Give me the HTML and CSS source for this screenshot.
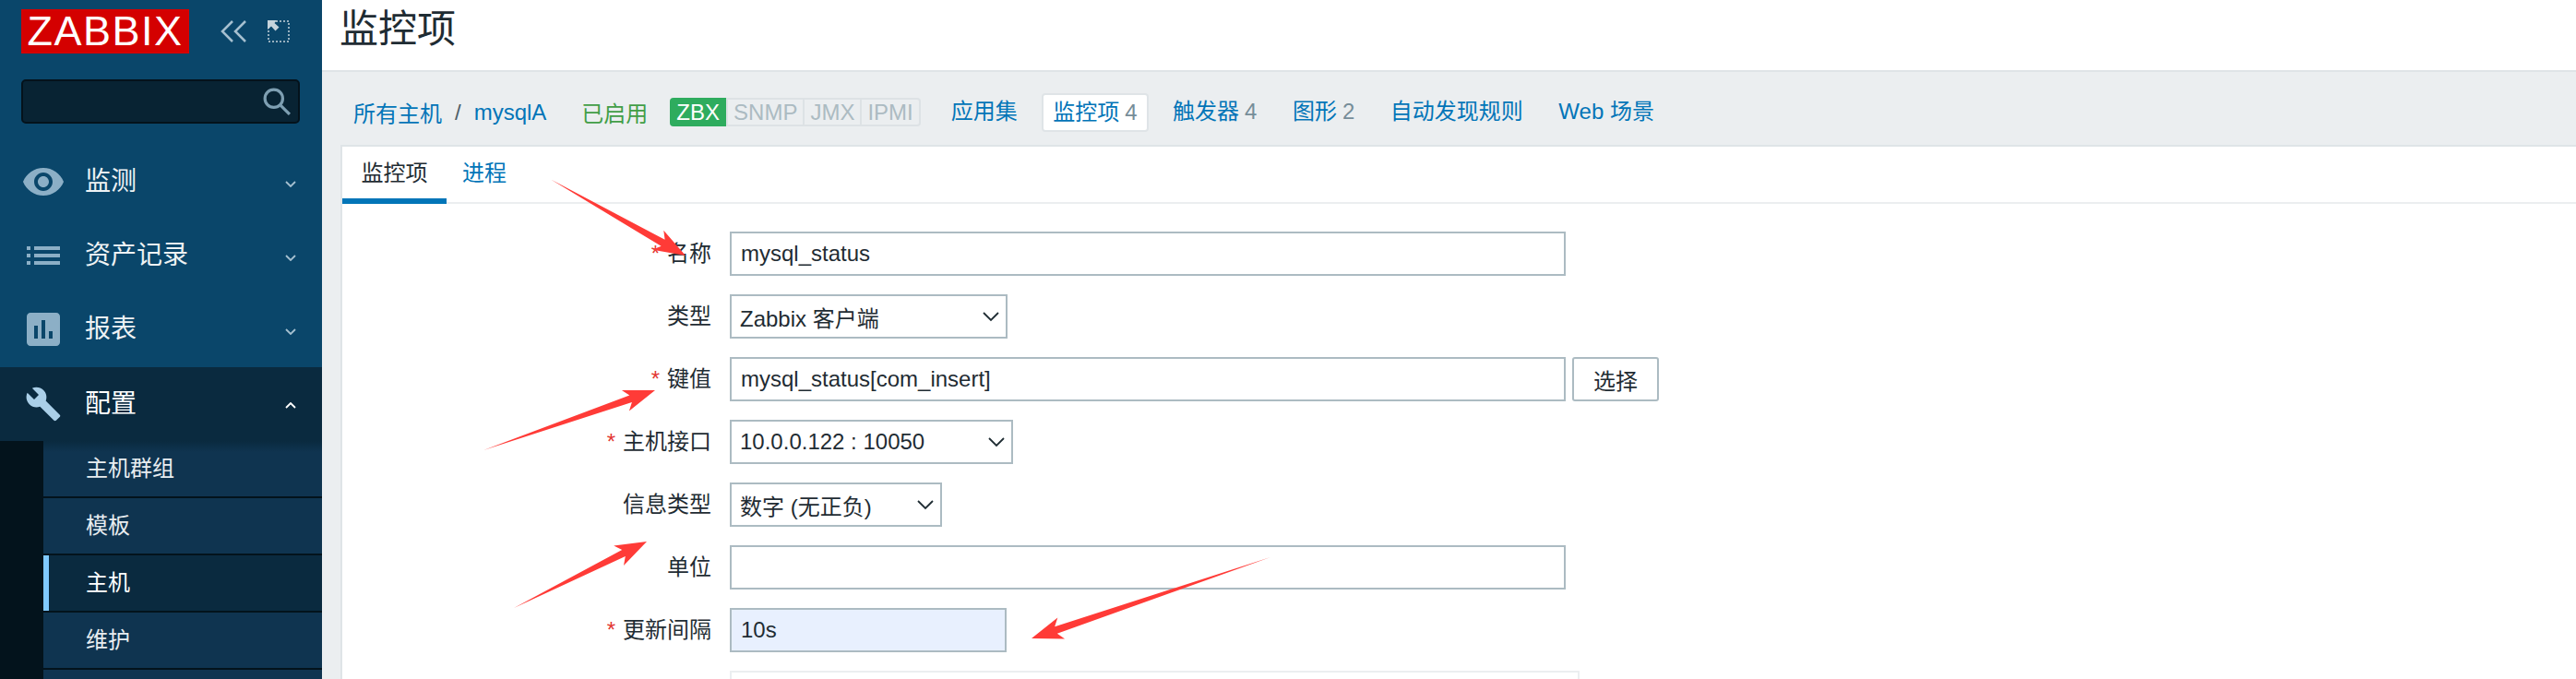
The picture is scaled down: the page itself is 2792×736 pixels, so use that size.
FILE: index.html
```html
<!DOCTYPE html>
<html lang="en">
	<head>
		<meta charset="utf-8">
		<title>监控项</title>
		<link rel="stylesheet" href="styles.css">
	</head>
	<body>
		<aside class="sidebar">
			<div class="brand">
				<div class="logo">ZABBIX</div>
				<svg class="brand-icon collapse" viewBox="0 0 28 24"><path d="M13 1 2 12l11 11M27 1 16 12l11 11"/></svg>
				<svg class="brand-icon expand" viewBox="0 0 24 24"><rect x="1" y="1" width="22" height="22"/><path class="arrow-fill" d="M0 0h10L7.500 3l5 4.500-4 4-4.500-5L0 10z"/></svg>
			</div>
			<div class="search">
				<svg viewBox="0 0 28 28"><circle cx="11" cy="11" r="9"/><path d="m18 18 9 9"/></svg>
			</div>
			<nav class="menu">
				<a class="menu-item">
					<span class="menu-icon"><svg width="48" height="48" viewBox="0 0 24 24"><path d="M12 4.500C7 4.500 2.730 7.610 1 12c1.730 4.390 6 7.500 11 7.500s9.270-3.110 11-7.500c-1.730-4.390-6-7.500-11-7.500zM12 17c-2.760 0-5-2.240-5-5s2.240-5 5-5 5 2.240 5 5-2.240 5-5 5zm0-8c-1.660 0-3 1.340-3 3s1.340 3 3 3 3-1.340 3-3-1.340-3-3-3z"/></svg></span>
					<span class="menu-text">监测</span>
					<svg class="chevron" viewBox="0 0 12 7"><path d="m1 1 5 5 5-5"/></svg>
				</a>
				<a class="menu-item">
					<span class="menu-icon"><svg width="48" height="48" viewBox="0 0 24 24"><path d="M3 13h2v-2H3v2zm0 4h2v-2H3v2zm0-8h2V7H3v2zm4 4h14v-2H7v2zm0 4h14v-2H7v2zM7 7v2h14V7H7z"/></svg></span>
					<span class="menu-text">资产记录</span>
					<svg class="chevron" viewBox="0 0 12 7"><path d="m1 1 5 5 5-5"/></svg>
				</a>
				<a class="menu-item">
					<span class="menu-icon"><svg width="48" height="48" viewBox="0 0 24 24"><path d="M19 3H5c-1.100 0-2 .9-2 2v14c0 1.100.9 2 2 2h14c1.100 0 2-.9 2-2V5c0-1.100-.9-2-2-2zM9 17H7v-7h2v7zm4 0h-2V7h2v10zm4 0h-2v-4h2v4z"/></svg></span>
					<span class="menu-text">报表</span>
					<svg class="chevron" viewBox="0 0 12 7"><path d="m1 1 5 5 5-5"/></svg>
				</a>
				<a class="menu-item open">
					<span class="menu-icon"><svg width="40" height="40" viewBox="0 0 24 24"><path d="M22.700 19l-9.100-9.100c.9-2.300.4-5-1.500-6.900-2-2-5-2.400-7.400-1.300L9 6 6 9 1.600 4.700C.4 7.100.9 10.100 2.900 12.100c1.900 1.900 4.600 2.400 6.900 1.500l9.100 9.100c.4.4 1 .4 1.400 0l2.300-2.300c.5-.4.5-1.100.1-1.400z"/></svg></span>
					<span class="menu-text">配置</span>
					<svg class="chevron" viewBox="0 0 12 7"><path d="m1 6 5-5 5 5"/></svg>
				</a>
				<div class="submenu">
					<a class="sub-item first">主机群组</a>
					<a class="sub-item">模板</a>
					<a class="sub-item active">主机</a>
					<a class="sub-item">维护</a>
					<a class="sub-item stub"></a>
				</div>
			</nav>
		</aside>
		<main class="content">
			<header class="page-head">
				<h1>监控项</h1>
			</header>
			<div class="host-nav">
				<a class="link">所有主机</a>
				<span class="slash">/</span>
				<a class="link">mysqlA</a>
				<span class="enabled">已启用</span>
				<div class="chips">
					<span class="chip on">ZBX</span>
					<span class="chip">SNMP</span>
					<span class="chip">JMX</span>
					<span class="chip">IPMI</span>
				</div>
				<div class="host-tabs">
					<a class="host-tab">应用集</a>
					<a class="host-tab current">监控项<span class="count">4</span></a>
					<a class="host-tab">触发器<span class="count">4</span></a>
					<a class="host-tab">图形<span class="count">2</span></a>
					<a class="host-tab">自动发现规则</a>
					<a class="host-tab">Web 场景</a>
				</div>
			</div>
			<section class="panel">
				<div class="tabs">
					<a class="tab selected">监控项</a>
					<a class="tab">进程</a>
				</div>
				<form class="form">
					<label class="field-label"><i>*</i>名称</label>
					<input class="control wide" type="text" value="mysql_status">

					<label class="field-label">类型</label>
					<div class="control select sel-type"><span>Zabbix 客户端</span><svg viewBox="0 0 18 11"><path d="m1 1 8 8 8-8"/></svg></div>

					<label class="field-label"><i>*</i>键值</label>
					<div class="key-row">
						<input class="control wide" type="text" value="mysql_status[com_insert]">
						<button class="btn" type="button">选择</button>
					</div>

					<label class="field-label"><i>*</i>主机接口</label>
					<div class="control select sel-iface"><span>10.0.0.122 : 10050</span><svg viewBox="0 0 18 11"><path d="m1 1 8 8 8-8"/></svg></div>

					<label class="field-label">信息类型</label>
					<div class="control select sel-info"><span>数字 (无正负)</span><svg viewBox="0 0 18 11"><path d="m1 1 8 8 8-8"/></svg></div>

					<label class="field-label">单位</label>
					<input class="control wide" type="text">

					<label class="field-label"><i>*</i>更新间隔</label>
					<input class="control interval" type="text" value="10s">

					<span></span>
					<div class="intervals-box"></div>
				</form>
			</section>
		</main>
		<!-- red arrows drawn on top of the screenshot -->
		<svg class="arrows" width="2792" height="736" viewBox="0 0 2792 736">
			<polygon points="597,194.5 716.6,266.8 707.5,270.8 743,277 719.3,249.8 720.6,259.8"/>
			<polygon points="524,488 684.9,436 681.9,445.5 710,423 673.9,422.9 682.3,428.4"/>
			<polygon points="557,659 677.8,603.1 676,612.9 701,587 665.2,591.5 674.2,595.9"/>
			<polygon points="1377,604 1145.8,686.8 1154.1,692.4 1118,692 1146.3,669.6 1143.2,679.2"/>
		</svg>
	</body>
</html>
```

FILE: styles.css
```css
* {
	box-sizing: border-box;
}
body {
	margin: 0;
	height: 736px;
	display: flex;
	overflow: hidden;
	background-color: #ebeef0;
	color: #1f2c33;
	font-family: "Liberation Sans", "Noto Sans CJK SC", sans-serif;
	font-size: 24px;
}

/* sidebar */
.sidebar {
	width: 349px;
	height: 736px;
	flex-shrink: 0;
	background-color: #0a466a;
	overflow: hidden;
}
.brand {
	height: 86px;
	padding: 10px 0 0 23px;
	display: flex;
	align-items: flex-start;
}
.logo {
	width: 182px;
	height: 48px;
	background-color: #d40000;
	color: #fff;
	font-size: 45px;
	line-height: 48px;
	letter-spacing: 1.5px;
	text-align: center;
}
.brand-icon {
	width: 28px;
	height: 24px;
	margin-top: 12px;
	fill: none;
}
.collapse {
	margin-left: 34px;
	stroke: #a6c0d0;
	stroke-width: 2.5;
}
.expand {
	width: 24px;
	margin-left: 23px;
	stroke: #c6d4dc;
	stroke-width: 1.5;
	stroke-dasharray: 2 2;
}
.arrow-fill {
	fill: #c6d4dc;
	stroke: none;
}
.search {
	width: 302px;
	height: 48px;
	margin-left: 23px;
	padding: 7px 8px 0 0;
	display: flex;
	justify-content: flex-end;
	background-color: #082333;
	border: 2px solid #04121b;
	border-radius: 5px;
}
.search svg {
	width: 30px;
	height: 30px;
	fill: none;
	stroke: #7e9fb2;
	stroke-width: 3;
}
.menu {
	margin-top: 23px;
}
.menu-item {
	height: 80px;
	padding: 0 28px 0 23px;
	display: flex;
	align-items: center;
	color: #eef2f4;
	font-size: 28px;
}
.menu-icon {
	width: 48px;
	height: 48px;
	margin-right: 21px;
	display: flex;
	align-items: center;
	justify-content: center;
	fill: #8cafc6;
}
.menu-text {
	flex: 1;
	padding-bottom: 6px;
}
.chevron {
	width: 12px;
	height: 7px;
	margin-top: 4px;
	fill: none;
	stroke: #a6c0d0;
	stroke-width: 1.8;
}
.menu-item.open {
	margin-top: 1px;
	background-color: #0a2a3f;
	color: #fff;
}
.open .menu-icon {
	fill: #aacfe8;
}
.open .chevron {
	margin-top: 3px;
	stroke: #fff;
}
.submenu {
	padding-left: 47px;
	background-color: #03131c;
}
.sub-item {
	height: 60px;
	margin-bottom: 2px;
	padding: 0 0 6px 46px;
	display: flex;
	align-items: center;
	background-color: #0f3450;
	color: #e8edf0;
}
.sub-item.first {
	background-image: linear-gradient(#0a2a3f, #0f3450 12px);
}
.sub-item.active {
	padding-left: 40px;
	background-color: #0a2a3f;
	border-left: 6px solid #80caff;
	color: #fff;
}
.sub-item.stub {
	height: 10px;
	margin-bottom: 0;
	padding: 0;
}

/* main area */
.content {
	flex: 1;
	min-width: 0;
	height: 736px;
}
.page-head {
	height: 78px;
	padding-left: 19px;
	background-color: #fff;
	border-bottom: 2px solid #dfe4e7;
}
.page-head h1 {
	margin: 0;
	font-size: 42px;
	font-weight: normal;
	line-height: 64px;
}
.host-nav {
	height: 79px;
	padding: 8px 0 0 34px;
	display: flex;
	align-items: center;
	background-color: #ebeef0;
}
.link {
	color: #0275b8;
}
.slash {
	margin: 0 14px;
	color: #4f5f68;
}
.enabled {
	margin: 0 24px 0 38px;
	color: #429e47;
}
.chips {
	height: 31px;
	display: flex;
	background-color: #ebeef0;
	border: 2px solid #dde2e5;
	border-radius: 4px;
	line-height: 27px;
}
.chip {
	padding: 0 6px;
	border-left: 2px solid #dde2e5;
	color: #acbbc2;
}
.chip.on {
	margin: -2px 0 -2px -2px;
	padding: 2px 7px;
	background-color: #2eac5e;
	border: 0;
	border-radius: 4px 0 0 4px;
	color: #fff;
}
.host-tabs {
	margin-left: 21px;
	display: flex;
	gap: 14.5px;
}
.host-tab {
	height: 42px;
	padding: 0 12px;
	color: #0275b8;
	line-height: 40px;
}
.host-tab.current {
	background-color: #fff;
	border: 2px solid #dfe4e7;
	border-radius: 4px;
	padding: 0 10px;
	line-height: 38px;
}
.count {
	margin-left: 6px;
	color: #768d99;
}
.panel {
	height: 579px;
	margin-left: 20px;
	background-color: #fff;
	border-top: 2px solid #dfe4e7;
	border-left: 2px solid #dfe4e7;
}
.tabs {
	height: 62px;
	display: flex;
	border-bottom: 2px solid #ebeef0;
}
.tab {
	width: 113px;
	height: 62px;
	text-align: center;
	color: #0275b8;
	line-height: 58px;
}
.tab + .tab {
	width: 74px;
	padding-left: 8px;
}
.tab.selected {
	color: #1f2c33;
	border-bottom: 6px solid #0275b8;
}

/* form */
.form {
	padding-top: 30px;
	display: grid;
	grid-template-columns: 400px auto;
	column-gap: 20px;
	row-gap: 20px;
	justify-items: start;
}
.field-label {
	height: 48px;
	justify-self: end;
	line-height: 48px;
}
.field-label i {
	margin-right: 8px;
	color: #e33734;
	font-style: normal;
}
.control {
	height: 48px;
	padding: 0 10px;
	background-color: #fff;
	border: 2px solid #acbbc2;
	border-radius: 0;
	color: #1f2c33;
	font-family: inherit;
	font-size: 24px;
	outline: none;
}
.wide {
	width: 906px;
}
.key-row {
	display: flex;
	gap: 7px;
}
.btn {
	width: 94px;
	height: 48px;
	padding: 0;
	background-color: #fff;
	border: 2px solid #acbbc2;
	border-radius: 3px;
	color: #1f2c33;
	font-family: inherit;
	font-size: 24px;
}
.select {
	padding: 0 7px 0 9px;
	display: flex;
	align-items: center;
	justify-content: space-between;
}
.select svg {
	width: 18px;
	height: 11px;
	fill: none;
	stroke: #1f2c33;
	stroke-width: 1.8;
}
.sel-type {
	width: 301px;
}
.sel-iface {
	width: 307px;
}
.sel-info {
	width: 230px;
}
.interval {
	width: 300px;
	background-color: #e8f0fe;
}
.intervals-box {
	width: 921px;
	height: 9px;
	border: 2px solid #ebeef0;
	border-bottom: 0;
}

/* arrows */
.arrows {
	position: absolute;
	left: 0;
	top: 0;
	fill: #ff3b37;
	pointer-events: none;
}
```
